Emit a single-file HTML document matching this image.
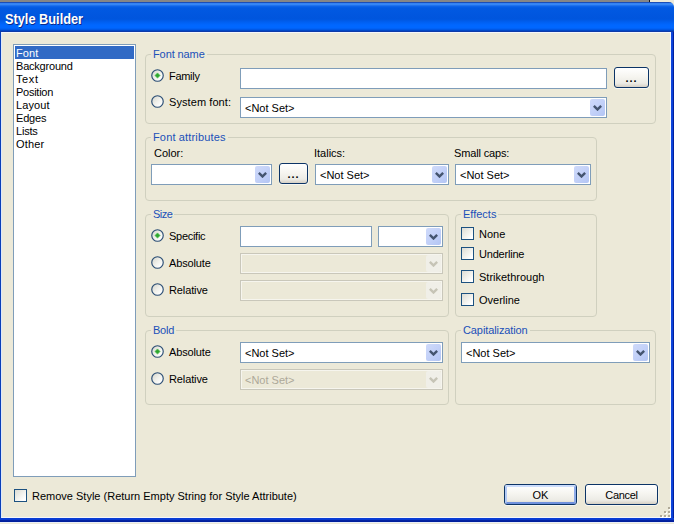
<!DOCTYPE html>
<html>
<head>
<meta charset="utf-8">
<title>Style Builder</title>
<style>
html,body{margin:0;padding:0;}
body{width:674px;height:524px;overflow:hidden;background:#ece9d8;position:relative;
  font-family:"Liberation Sans",sans-serif;font-size:11px;color:#000;line-height:13px;}
*{box-sizing:border-box;}
.abs{position:absolute;}
#win{position:absolute;left:0;top:0;width:674px;height:524px;background:#ece9d8;overflow:hidden;}
/* top strip behind window */
#topgray{position:absolute;left:0;top:0;width:649px;height:2px;background:#868686;}
#topdark{position:absolute;left:649px;top:0;width:1px;height:2px;background:#1a1a1a;}
#topcream{position:absolute;left:650px;top:0;width:24px;height:2px;background:#ece9d8;}
/* title bar */
#title{position:absolute;left:0;top:2px;width:674px;height:30px;
  border-top-right-radius:5px;
  background:linear-gradient(to bottom,#1a4eb8 0.5px,#3482f4 1.5px,#3686f5 2.5px,#1e72ee 3.5px,#0c62e8 4.5px,#0259e2 6px,#0055dd 17px,#005ff0 20px,#0067ff 23px,#0067ff 26px,#0058e6 27.5px,#0048c8 28.5px,#0e3aa8 29.5px);}
#title .cap{position:absolute;left:4.5px;top:9px;font-weight:bold;font-size:14px;line-height:16px;color:#fff;
  text-shadow:1px 1px 0 #0a2a8a;white-space:nowrap;transform:scaleX(0.912);transform-origin:0 0;}
/* frame borders */
#bl{position:absolute;left:0;top:32px;width:1px;height:490px;background:#0a3fb8;}
#hl{position:absolute;left:1px;top:32px;width:670px;height:486px;border:1px solid #f4f6fb;border-left-color:#dfe9fb;}
#br{position:absolute;left:671px;top:32px;width:3px;height:490px;background:linear-gradient(to right,#0f48dc,#0a3fd8 66%,#0020a0 67%);}
#bb{position:absolute;left:0;top:518px;width:674px;height:4px;background:linear-gradient(to bottom,#0a3fd6,#0838d0 49%,#0424a4 50%,#001c98);}
#bb2{position:absolute;left:0;top:522px;width:674px;height:1px;background:#e9edf6;}
/* listbox */
#list{position:absolute;left:13px;top:44px;width:123px;height:433px;border:1px solid #7f9db9;background:#fff;}
#list div{position:absolute;left:1px;width:119px;height:13px;line-height:15px;padding-left:1px;white-space:nowrap;}
#list .sel{background:#316ac5;color:#fff;}
/* group boxes */
.grp{position:absolute;border:1px solid #d0d0bf;border-radius:4px;}
.glab{position:absolute;color:#2050b8;background:#ece9d8;padding:0 2px;height:13px;line-height:13px;white-space:nowrap;margin-top:1px;}
.t{position:absolute;white-space:nowrap;height:13px;line-height:13px;margin-top:1px;}
/* radio */
.rad{position:absolute;width:13px;height:13px;}
.rad svg{position:absolute;left:0;top:0;}
/* checkbox */
.chk{position:absolute;width:13px;height:13px;border:1px solid #1c5180;
  background:linear-gradient(135deg,#dcdcd4 0%,#efefea 45%,#ffffff 85%);}
/* inputs */
.inp{position:absolute;height:21px;border:1px solid #7f9db9;background:#fff;}
.inp .v{position:absolute;left:4px;top:4px;height:13px;line-height:13px;white-space:nowrap;}
.inp .dd{position:absolute;right:1px;top:1px;width:15px;height:17px;border-radius:2px;
  background:linear-gradient(135deg,#cfdafa 0%,#c3d1f8 50%,#b3c5f4 100%);}
.inp .dd svg{position:absolute;left:3px;top:6px;}
.inp.dis{border-color:#c9c7ba;background:#ece9d8;box-shadow:inset 0 0 0 1px #f6f5ee;}
.inp.dis .v{color:#aca899;}
.inp.dis .dd{background:#f0efe8;}
/* buttons */
.btn{position:absolute;border:1px solid #0c3466;border-radius:3px;text-align:center;
  background:linear-gradient(to bottom,#ffffff 0%,#f6f5f0 45%,#ecebe5 80%,#d6d0c5 100%);
  box-shadow:0 1px 0 #f8f7f0,1px 0 0 #f4f3ea;}
.btn span{position:absolute;left:0;right:0;white-space:nowrap;}
.btn .dots{font-weight:bold;letter-spacing:1px;}
.btn.def{box-shadow:inset 0 0 0 0 #000,0 1px 0 #f8f7f0,1px 0 0 #f4f3ea;}
.btn.def::before{content:"";position:absolute;left:0;top:0;right:0;bottom:0;border-radius:2px;
  border:2px solid #9fb9ec;border-top-color:#cbdcfb;border-left-color:#b4cbf5;border-bottom-color:#6f90dc;border-right-color:#8eabe8;}
/* grip */
#grip i{position:absolute;width:2px;height:2px;background:#b0aa98;box-shadow:1px 1px 0 #fff;}
</style>
</head>
<body>
<div id="win">
  <div id="title"><div class="cap">Style Builder</div></div>
  <div id="topgray"></div><div id="topdark"></div><div id="topcream"></div>
  <div id="hl"></div><div id="bl"></div><div id="br"></div><div id="bb"></div><div id="bb2"></div>

  <div id="list">
    <div class="sel" style="top:1px;letter-spacing:0.1px">Font</div>
    <div style="top:14px;letter-spacing:-0.21px">Background</div>
    <div style="top:27px;letter-spacing:0.6px">Text</div>
    <div style="top:40px;letter-spacing:-0.26px">Position</div>
    <div style="top:53px;letter-spacing:0.1px">Layout</div>
    <div style="top:66px;letter-spacing:-0.2px">Edges</div>
    <div style="top:79px;letter-spacing:-0.2px">Lists</div>
    <div style="top:92px;letter-spacing:0.16px">Other</div>
  </div>

  <!-- Font name -->
  <div class="grp" style="left:145px;top:54px;width:511px;height:70px"></div>
  <div class="glab" style="left:151px;top:47px;letter-spacing:-0.1px">Font name</div>
  <div class="rad" style="left:151px;top:69px"><svg width="13" height="13" viewBox="0 0 13 13"><linearGradient id="rg" x1="0" y1="0" x2="1" y2="1"><stop offset="0.1" stop-color="#d9d9d0"/><stop offset="0.5" stop-color="#f1f1ec"/><stop offset="0.85" stop-color="#ffffff"/></linearGradient><circle cx="6.5" cy="6.5" r="5.75" fill="url(#rg)" stroke="#2a4d74" stroke-width="1.15"/><path d="M6.5 3.9L9.1 6.5L6.5 9.1L3.9 6.5Z" fill="#2ea52e" stroke="#55c555" stroke-width="0.7" stroke-linejoin="round"/></svg></div>
  <div class="t" style="left:169px;top:69px;letter-spacing:-0.3px">Family</div>
  <div class="inp" style="left:240px;top:68px;width:367px"></div>
  <div class="btn" style="left:614px;top:67px;width:35px;height:21px"><span class="dots" style="top:4px">...</span></div>
  <div class="rad" style="left:151px;top:95px"><svg width="13" height="13" viewBox="0 0 13 13"><linearGradient id="rg" x1="0" y1="0" x2="1" y2="1"><stop offset="0.1" stop-color="#d9d9d0"/><stop offset="0.5" stop-color="#f1f1ec"/><stop offset="0.85" stop-color="#ffffff"/></linearGradient><circle cx="6.5" cy="6.5" r="5.75" fill="url(#rg)" stroke="#2a4d74" stroke-width="1.15"/></svg></div>
  <div class="t" style="left:169px;top:95px;letter-spacing:0.08px">System font:</div>
  <div class="inp" style="left:240px;top:97px;width:367px"><div class="v">&lt;Not Set&gt;</div><div class="dd"><svg width="9" height="6" viewBox="0 0 9 6"><path d="M0 1.7L1.7 0L4.5 2.8L7.3 0L9 1.7L4.5 6.2Z" fill="#44546f"/></svg></div></div>

  <!-- Font attributes -->
  <div class="grp" style="left:145px;top:137px;width:452px;height:64px"></div>
  <div class="glab" style="left:151px;top:130px;letter-spacing:0.15px">Font attributes</div>
  <div class="t" style="left:154px;top:146px">Color:</div>
  <div class="t" style="left:314px;top:146px">Italics:</div>
  <div class="t" style="left:454px;top:146px;letter-spacing:-0.15px">Small caps:</div>
  <div class="inp" style="left:151px;top:164px;width:121px"><div class="dd"><svg width="9" height="6" viewBox="0 0 9 6"><path d="M0 1.7L1.7 0L4.5 2.8L7.3 0L9 1.7L4.5 6.2Z" fill="#44546f"/></svg></div></div>
  <div class="btn" style="left:279px;top:163px;width:29px;height:21px"><span class="dots" style="top:4px">...</span></div>
  <div class="inp" style="left:315px;top:164px;width:134px"><div class="v">&lt;Not Set&gt;</div><div class="dd"><svg width="9" height="6" viewBox="0 0 9 6"><path d="M0 1.7L1.7 0L4.5 2.8L7.3 0L9 1.7L4.5 6.2Z" fill="#44546f"/></svg></div></div>
  <div class="inp" style="left:455px;top:164px;width:136px"><div class="v">&lt;Not Set&gt;</div><div class="dd"><svg width="9" height="6" viewBox="0 0 9 6"><path d="M0 1.7L1.7 0L4.5 2.8L7.3 0L9 1.7L4.5 6.2Z" fill="#44546f"/></svg></div></div>

  <!-- Size -->
  <div class="grp" style="left:145px;top:214px;width:304px;height:103px"></div>
  <div class="glab" style="left:151px;top:207px;letter-spacing:-0.5px">Size</div>
  <div class="rad" style="left:151px;top:229px"><svg width="13" height="13" viewBox="0 0 13 13"><linearGradient id="rg" x1="0" y1="0" x2="1" y2="1"><stop offset="0.1" stop-color="#d9d9d0"/><stop offset="0.5" stop-color="#f1f1ec"/><stop offset="0.85" stop-color="#ffffff"/></linearGradient><circle cx="6.5" cy="6.5" r="5.75" fill="url(#rg)" stroke="#2a4d74" stroke-width="1.15"/><path d="M6.5 3.9L9.1 6.5L6.5 9.1L3.9 6.5Z" fill="#2ea52e" stroke="#55c555" stroke-width="0.7" stroke-linejoin="round"/></svg></div>
  <div class="t" style="left:169px;top:229px;letter-spacing:-0.28px">Specific</div>
  <div class="inp" style="left:240px;top:226px;width:132px"></div>
  <div class="inp" style="left:378px;top:226px;width:65px"><div class="dd"><svg width="9" height="6" viewBox="0 0 9 6"><path d="M0 1.7L1.7 0L4.5 2.8L7.3 0L9 1.7L4.5 6.2Z" fill="#44546f"/></svg></div></div>
  <div class="rad" style="left:151px;top:256px"><svg width="13" height="13" viewBox="0 0 13 13"><linearGradient id="rg" x1="0" y1="0" x2="1" y2="1"><stop offset="0.1" stop-color="#d9d9d0"/><stop offset="0.5" stop-color="#f1f1ec"/><stop offset="0.85" stop-color="#ffffff"/></linearGradient><circle cx="6.5" cy="6.5" r="5.75" fill="url(#rg)" stroke="#2a4d74" stroke-width="1.15"/></svg></div>
  <div class="t" style="left:169px;top:256px;letter-spacing:-0.15px">Absolute</div>
  <div class="inp dis" style="left:240px;top:253px;width:203px"><div class="dd"><svg width="9" height="6" viewBox="0 0 9 6"><path d="M0 1.7L1.7 0L4.5 2.8L7.3 0L9 1.7L4.5 6.2Z" fill="#c6c4b6"/></svg></div></div>
  <div class="rad" style="left:151px;top:283px"><svg width="13" height="13" viewBox="0 0 13 13"><linearGradient id="rg" x1="0" y1="0" x2="1" y2="1"><stop offset="0.1" stop-color="#d9d9d0"/><stop offset="0.5" stop-color="#f1f1ec"/><stop offset="0.85" stop-color="#ffffff"/></linearGradient><circle cx="6.5" cy="6.5" r="5.75" fill="url(#rg)" stroke="#2a4d74" stroke-width="1.15"/></svg></div>
  <div class="t" style="left:169px;top:283px;letter-spacing:-0.12px">Relative</div>
  <div class="inp dis" style="left:240px;top:280px;width:203px"><div class="dd"><svg width="9" height="6" viewBox="0 0 9 6"><path d="M0 1.7L1.7 0L4.5 2.8L7.3 0L9 1.7L4.5 6.2Z" fill="#c6c4b6"/></svg></div></div>

  <!-- Effects -->
  <div class="grp" style="left:455px;top:214px;width:142px;height:103px"></div>
  <div class="glab" style="left:461px;top:207px">Effects</div>
  <div class="chk" style="left:461px;top:227px"></div>
  <div class="t" style="left:479px;top:227px">None</div>
  <div class="chk" style="left:461px;top:247px"></div>
  <div class="t" style="left:479px;top:247px;letter-spacing:-0.2px">Underline</div>
  <div class="chk" style="left:461px;top:270px"></div>
  <div class="t" style="left:479px;top:270px">Strikethrough</div>
  <div class="chk" style="left:461px;top:293px"></div>
  <div class="t" style="left:479px;top:293px">Overline</div>

  <!-- Bold -->
  <div class="grp" style="left:145px;top:330px;width:304px;height:75px"></div>
  <div class="glab" style="left:151px;top:323px;letter-spacing:-0.25px">Bold</div>
  <div class="rad" style="left:151px;top:345px"><svg width="13" height="13" viewBox="0 0 13 13"><linearGradient id="rg" x1="0" y1="0" x2="1" y2="1"><stop offset="0.1" stop-color="#d9d9d0"/><stop offset="0.5" stop-color="#f1f1ec"/><stop offset="0.85" stop-color="#ffffff"/></linearGradient><circle cx="6.5" cy="6.5" r="5.75" fill="url(#rg)" stroke="#2a4d74" stroke-width="1.15"/><path d="M6.5 3.9L9.1 6.5L6.5 9.1L3.9 6.5Z" fill="#2ea52e" stroke="#55c555" stroke-width="0.7" stroke-linejoin="round"/></svg></div>
  <div class="t" style="left:169px;top:345px;letter-spacing:-0.15px">Absolute</div>
  <div class="inp" style="left:240px;top:342px;width:203px"><div class="v">&lt;Not Set&gt;</div><div class="dd"><svg width="9" height="6" viewBox="0 0 9 6"><path d="M0 1.7L1.7 0L4.5 2.8L7.3 0L9 1.7L4.5 6.2Z" fill="#44546f"/></svg></div></div>
  <div class="rad" style="left:151px;top:372px"><svg width="13" height="13" viewBox="0 0 13 13"><linearGradient id="rg" x1="0" y1="0" x2="1" y2="1"><stop offset="0.1" stop-color="#d9d9d0"/><stop offset="0.5" stop-color="#f1f1ec"/><stop offset="0.85" stop-color="#ffffff"/></linearGradient><circle cx="6.5" cy="6.5" r="5.75" fill="url(#rg)" stroke="#2a4d74" stroke-width="1.15"/></svg></div>
  <div class="t" style="left:169px;top:372px;letter-spacing:-0.12px">Relative</div>
  <div class="inp dis" style="left:240px;top:369px;width:203px"><div class="v">&lt;Not Set&gt;</div><div class="dd"><svg width="9" height="6" viewBox="0 0 9 6"><path d="M0 1.7L1.7 0L4.5 2.8L7.3 0L9 1.7L4.5 6.2Z" fill="#c6c4b6"/></svg></div></div>

  <!-- Capitalization -->
  <div class="grp" style="left:455px;top:330px;width:201px;height:75px"></div>
  <div class="glab" style="left:461px;top:323px;letter-spacing:-0.1px">Capitalization</div>
  <div class="inp" style="left:461px;top:342px;width:189px"><div class="v">&lt;Not Set&gt;</div><div class="dd"><svg width="9" height="6" viewBox="0 0 9 6"><path d="M0 1.7L1.7 0L4.5 2.8L7.3 0L9 1.7L4.5 6.2Z" fill="#44546f"/></svg></div></div>

  <!-- bottom -->
  <div class="chk" style="left:14px;top:489px"></div>
  <div class="t" style="left:32px;top:489px">Remove Style (Return Empty String for Style Attribute)</div>
  <div class="btn def" style="left:504px;top:484px;width:73px;height:21px"><span style="top:4px">OK</span></div>
  <div class="btn" style="left:585px;top:484px;width:73px;height:21px"><span style="top:4px;letter-spacing:-0.3px">Cancel</span></div>
  <div id="grip">
    <i style="left:668px;top:507px"></i>
    <i style="left:664px;top:511px"></i><i style="left:668px;top:511px"></i>
    <i style="left:660px;top:515px"></i><i style="left:664px;top:515px"></i><i style="left:668px;top:515px"></i>
  </div>
</div>
</body>
</html>
